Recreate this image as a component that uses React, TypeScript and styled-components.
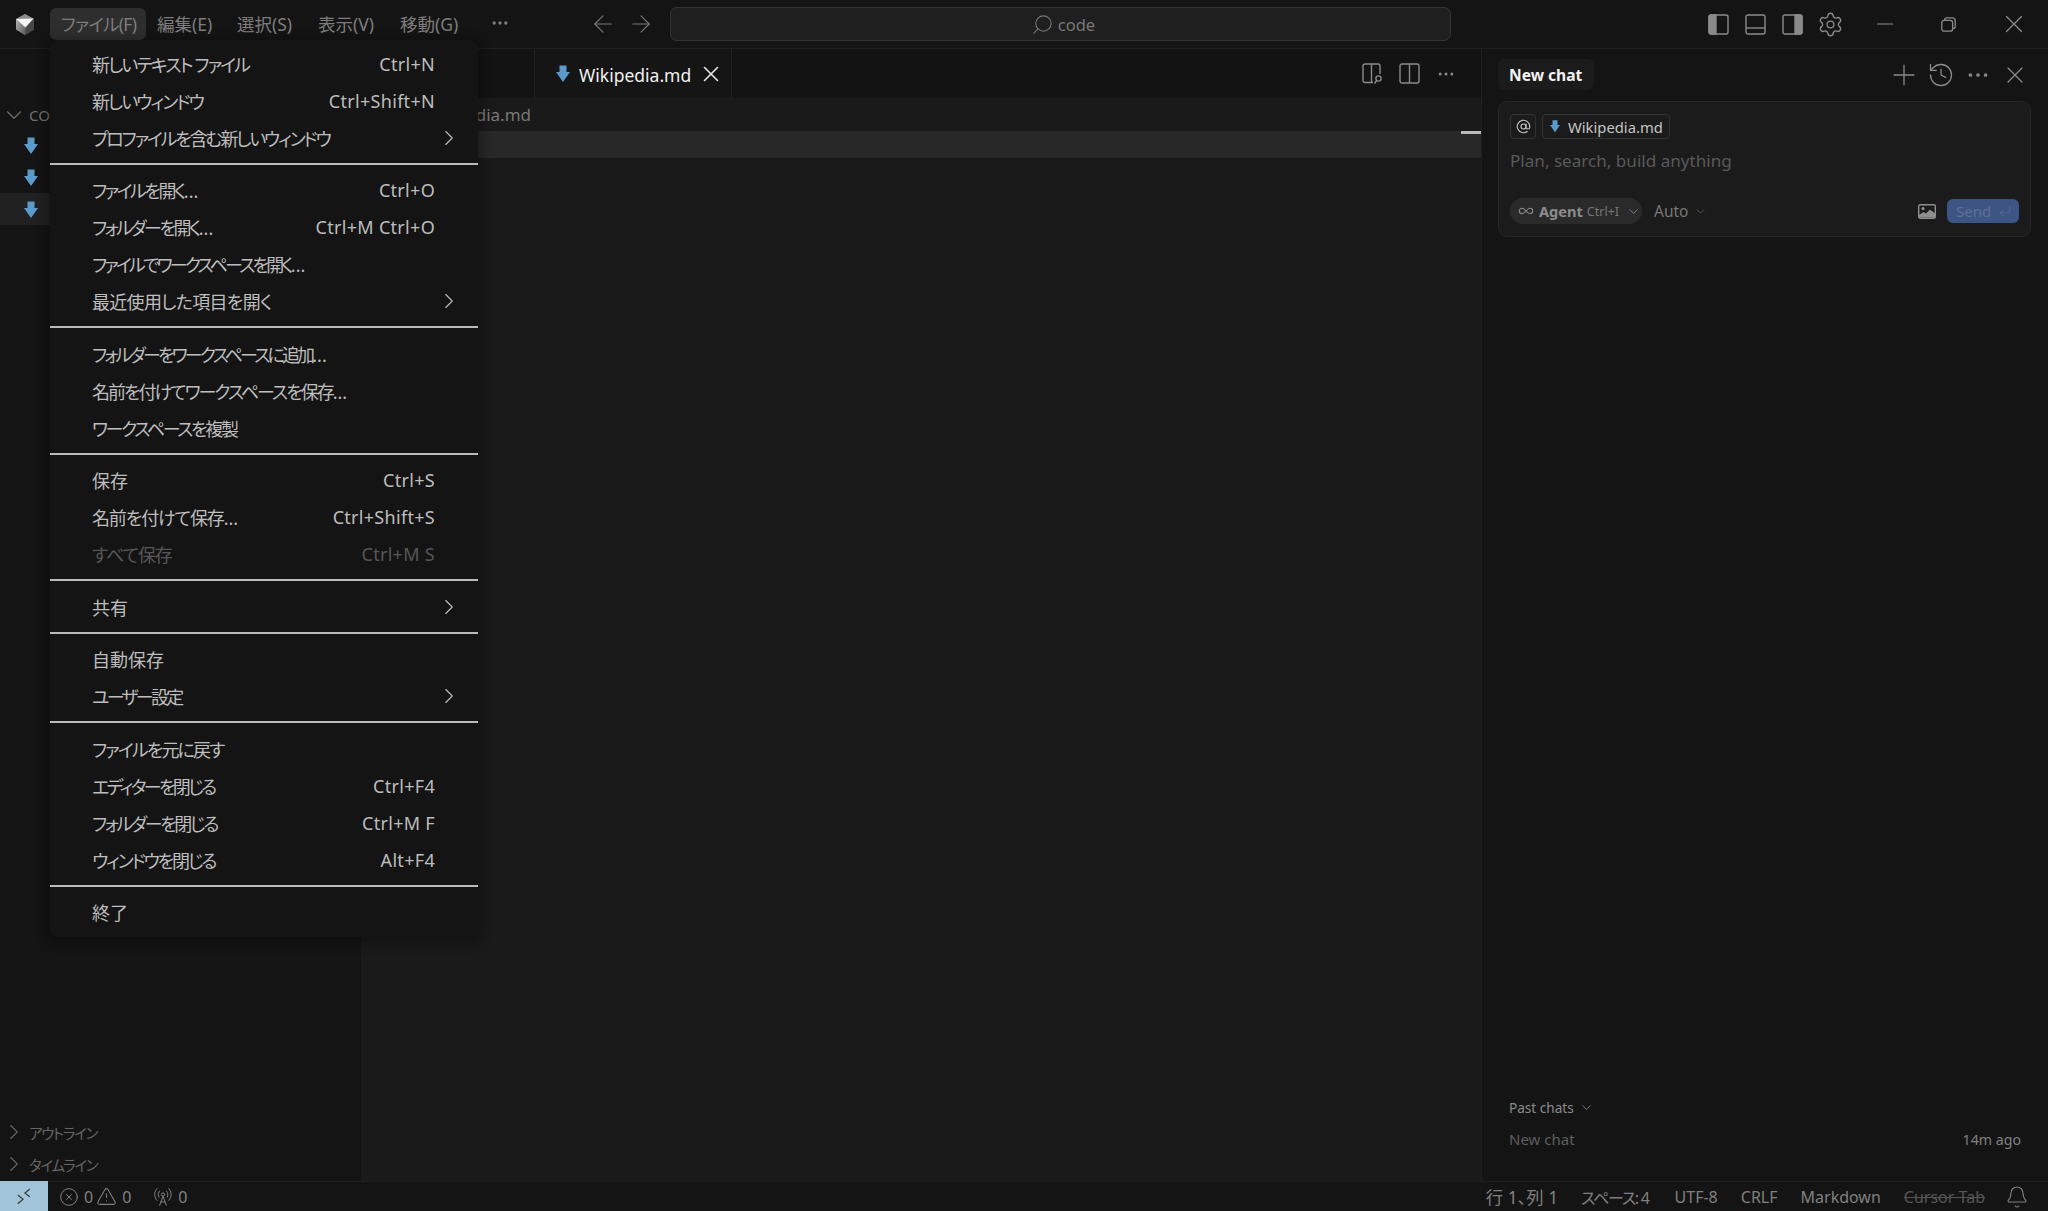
import React from "react";
import styled, { createGlobalStyle } from "styled-components";
import {
  ArrowLeft, ArrowRight, AtSign, Bell, ChevronDown, ChevronRight, CircleX, CornerDownLeft,
  History, Infinity as InfinityIcon, Minus, MoreHorizontal, Plus, RadioTower,
  Search, Settings, TriangleAlert, X,
} from "lucide-react";

const UI = `"Noto Sans", "Noto Sans CJK JP", sans-serif`;

const Global = createGlobalStyle`
  html, body { margin: 0; padding: 0; background: #141414; }
  #root { width: 2048px; height: 1211px; overflow: hidden; }
  * { box-sizing: border-box; }
`;

const Page = styled.div`
  position: relative; width: 2048px; height: 1211px; display: flex; flex-direction: column;
  background: #141414; color: #8a8a8a; font-family: ${UI}; font-size: 17px;
  font-feature-settings: "palt"; overflow: hidden;
`;

/* title bar */
const TitleBar = styled.header`
  height: 49px; flex: none; display: flex; align-items: center; background: #141414;
  border-bottom: 1px solid #1e1e1e; color: #8a8a8a;
`;
const LogoSlot = styled.div` width: 50px; padding-left: 15px; display: flex; `;
const MenuBar = styled.nav` width: 480px; display: flex; align-items: center; `;
const MenuBarItem = styled.div<{ $open?: boolean; $width: number }>`
  height: 32px; width: ${p => p.$width}px; padding: 0 11px 2px; display: flex; align-items: center; border-radius: 6px;
  font-size: 17.5px; white-space: nowrap; color: #7d7d7d; background: ${p => (p.$open ? "#2e2e2e" : "transparent")};
`;
const OpenMenuLabel = styled.span` letter-spacing: -0.7px; `;
const NavArrows = styled.div` width: 140px; padding-left: 59px; display: flex; gap: 10px; color: #777; `;
const SearchBox = styled.div`
  width: 781px; height: 34px; padding-left: 5px; border: 1px solid #333; border-radius: 7px; background: #1f1f1f;
  display: flex; align-items: center; justify-content: center; gap: 4px; color: #777; font-size: 16.5px;
`;
const LayoutIcons = styled.div` margin-left: auto; display: flex; align-items: center; gap: 16px; color: #8a8a8a; `;
const GearSlot = styled.div` display: flex; margin-left: -2px; `;
const WindowControls = styled.div` margin-left: 28px; margin-right: 19px; display: flex; align-items: center; gap: 43px; color: #8a8a8a; `;

/* main */
const Main = styled.main` flex: 1; display: flex; min-height: 0; `;

const Sidebar = styled.aside`
  width: 362px; flex: none; display: flex; flex-direction: column; padding-top: 51px;
  background: #141414; border-right: 1px solid #1a1a1a;
`;
const SectionHeader = styled.div`
  height: 29px; display: flex; align-items: center; gap: 2px; padding-left: 1px; font-size: 15px; color: #707070;
`;
const BottomHeader = styled(SectionHeader)` height: 32px; font-size: 14.5px; letter-spacing: -1.3px; color: #666; `;
const FileRow = styled.div<{ $selected?: boolean }>`
  height: 32px; padding-left: 24px; display: flex; align-items: center; gap: 8px; color: #aaa;
  background: ${p => (p.$selected ? "#212121" : "transparent")};
`;
const BottomSections = styled.div` margin-top: auto; margin-bottom: 1px; `;

const Editor = styled.section` width: 1119px; flex: none; display: flex; flex-direction: column; background: #1a1a1a; `;
const TabBar = styled.div`
  height: 49px; flex: none; display: flex; align-items: stretch; background: #131313; padding-left: 172px;
`;
const Tab = styled.div`
  width: 198px; display: flex; align-items: center; padding-left: 21px; gap: 9px; background: #151515;
  border-left: 1px solid #202020; border-right: 1px solid #202020; color: #f0f0f0; font-size: 17.5px;
`;
const TabName = styled.span` padding-top: 2px; `;
const TabClose = styled.span` display: flex; margin-left: -2px; color: #e8e8e8; `;
const TabActions = styled.div`
  margin-left: auto; margin-right: 25px; display: flex; align-items: center; gap: 16px; color: #8a8a8a;
`;
const Breadcrumb = styled.div`
  height: 33px; flex: none; display: flex; align-items: center; padding-left: 60px; font-size: 17px; color: #777;
`;
const CurrentLine = styled.div` position: relative; height: 27px; flex: none; background: #282828; `;
const RulerMark = styled.div` position: absolute; right: 0; top: 0; width: 20px; height: 3px; background: #b9b9b9; `;

const Chat = styled.aside`
  flex: 1; display: flex; flex-direction: column; background: #141414; border-left: 1px solid #1f1f1f;
  padding: 10px 17px 0 16px; position: relative;
`;
const ChatHeader = styled.div` height: 31px; flex: none; display: flex; align-items: center; `;
const ChatTitle = styled.div`
  height: 31px; width: 96px; border-radius: 6px; background: #1b1b1b; color: #f2f2f2; font-weight: 700;
  font-size: 15.6px; display: flex; align-items: center; padding-left: 11px;
`;
const ChatActions = styled.div` margin-left: auto; margin-right: -2px; display: flex; align-items: center; color: #8a8a8a; `;
const ActionSlot = styled.div` width: 37px; height: 31px; display: flex; align-items: center; justify-content: center; svg { flex: none; } `;
const Composer = styled.div`
  margin-top: 11px; width: 533px; height: 136px; border: 1px solid #262626; border-radius: 9px; background: #1b1b1b;
  padding: 12px 12px 0 11px; display: flex; flex-direction: column;
`;
const ChipRow = styled.div` display: flex; gap: 6px; height: 25px; `;
const Chip = styled.div<{ $square?: boolean }>`
  height: 25px; border: 1px solid #333; border-radius: 4px; display: flex; align-items: center;
  justify-content: ${p => (p.$square ? "center" : "flex-start")}; width: ${p => (p.$square ? "26px" : "128px")};
  padding-left: ${p => (p.$square ? "0" : "7px")}; gap: 8px; font-size: 14.8px; color: #c4c4c4;
`;
const Placeholder = styled.div` margin-top: 9px; height: 26px; line-height: 26px; color: #595959; font-size: 17.1px; `;
const ComposerBar = styled.div` margin-top: 24px; display: flex; align-items: center; height: 26px; `;
const AgentPill = styled.div`
  width: 132px; height: 26px; border-radius: 13px; background: #2a2a2a; display: flex; align-items: center;
  padding-left: 8px; color: #8c8c8c;
`;
const AgentName = styled.span` margin-left: 5px; font-weight: 700; font-size: 14.6px; `;
const AgentKey = styled.span` margin-left: 4px; font-size: 12.5px; color: #777; `;
const AutoPicker = styled.div` margin-left: 12px; display: flex; align-items: center; gap: 6px; font-size: 15.5px; color: #777; `;
const BarRight = styled.div` margin-left: auto; margin-right: -1px; display: flex; align-items: center; gap: 11px; color: #8f8f8f; `;
const SendButton = styled.div`
  width: 72px; height: 24px; border-radius: 6px; background: #3d5585; color: #5f7090; font-size: 15px;
  display: flex; align-items: center; padding-left: 9px; gap: 7px;
`;
const PastChats = styled.div`
  position: absolute; left: 27px; right: 27px; bottom: 32px; display: flex; flex-direction: column; gap: 12px;
`;
const PastHeader = styled.div` height: 20px; display: flex; align-items: center; gap: 5px; font-size: 13.6px; color: #8a8a8a; `;
const PastRow = styled.div` height: 20px; display: flex; justify-content: space-between; align-items: center; font-size: 15px; color: #5e5e5e; `;
const PastTime = styled.span` color: #808080; font-size: 14.2px; `;

/* status bar */
const StatusBar = styled.footer`
  height: 30px; flex: none; display: flex; align-items: center; background: #141414; border-top: 1px solid #1e1e1e;
  color: #808080; font-size: 16px;
`;
const RemoteButton = styled.div`
  width: 48px; height: 30px; margin-top: -1px; background: #a2c4d8; color: #3a4348; display: flex; align-items: center; justify-content: center;
`;
const StatusItem = styled.div<{ $gap?: number }>`
  display: flex; align-items: center; gap: 5px; margin-left: ${p => p.$gap ?? 0}px; white-space: nowrap;
`;
const StatusRight = styled.div` margin-left: auto; margin-right: 19px; display: flex; align-items: center; gap: 23px; `;
const Position = styled.span` font-size: 17.4px; `;
const Indent = styled.span` letter-spacing: -1.3px; margin-right: 3px; `;
const Struck = styled.span` text-decoration: line-through; color: #555; `;
const BellSlot = styled.span` display: flex; margin-left: -3px; `;

/* file menu */
const FileMenu = styled.div`
  position: absolute; left: 50px; top: 40px; width: 428px; height: 897px; padding-top: 5px;
  background: #141414; border-radius: 8px; box-shadow: 0 3px 10px 5px rgba(0,0,0,.28); color: #bdbdbd;
`;
const MenuRow = styled.div<{ $disabled?: boolean }>`
  height: 37px; display: flex; align-items: center; padding: 0 25px 0 42px; position: relative;
  white-space: nowrap; color: ${p => (p.$disabled ? "#565656" : "#bdbdbd")};
`;
const MenuLabel = styled.span<{ $track?: number }>` font-size: 18px; letter-spacing: ${p => p.$track ?? 0}px; `;
const Dots = styled.span` letter-spacing: 0; `;
const Shortcut = styled.span` margin-left: auto; margin-right: 18px; font-size: 18px; letter-spacing: 0.3px; `;
const SubArrow = styled.span` position: absolute; right: 16px; top: 5.5px; display: flex; `;
const MenuSeparator = styled.div` height: 2px; margin: 6.75px 0; background: #bbb; `;

const MdIcon = ({ size = 14 }: { size?: number }) => (
  <svg width={size} height={(size * 17) / 14} viewBox="0 0 14 17" style={{ flex: "none" }}>
    <path d="M3.5 0.5 L10.5 0.5 L10.5 7 L14 7 L7 17 L0 7 L3.5 7 Z" fill="#5b9bc9" />
  </svg>
);
const Logo = () => (
  <svg width="20" height="21" viewBox="0 0 20 21">
    <defs>
      <linearGradient id="logoLeft" x1="0" y1="0" x2="1" y2="1">
        <stop offset="0" stopColor="#b4b4b4" />
        <stop offset="1" stopColor="#5a5a5a" />
      </linearGradient>
    </defs>
    <path d="M10 0 L19 5 L19 15.5 L10 21 L1 15.5 L1 5 Z" fill="#5c5c5c" />
    <path d="M1 5 L10 13 L10 21 L1 15.5 Z" fill="url(#logoLeft)" />
    <path d="M1 5 L10 0 L19 5 Z" fill="#8c8c8c" />
    <path d="M19 5 L19 15.5 L10 21 L11 12 Z" fill="#484848" />
    <path d="M1 5 L18.5 4.5 L10.5 13.5 Z" fill="#f4f4f4" />
  </svg>
);
const PanelIcon = ({ side }: { side: "left" | "bottom" | "right" }) => (
  <svg width="21" height="21" viewBox="0 0 21 21" fill="none" stroke="currentColor" strokeWidth="1.4">
    <rect x="1" y="1" width="19" height="19" rx="2" />
    {side === "left" && <path d="M1 3 a2 2 0 0 1 2-2 h5 v19 h-5 a2 2 0 0 1-2-2 Z" fill="currentColor" />}
    {side === "right" && <path d="M20 3 a2 2 0 0 0-2-2 h-5 v19 h5 a2 2 0 0 0 2-2 Z" fill="currentColor" />}
    {side === "bottom" && <path d="M1 14 h19" />}
  </svg>
);
const RestoreIcon = () => (
  <svg width="15" height="15" viewBox="0 0 15 15" fill="none" stroke="currentColor" strokeWidth="1.3">
    <rect x="0.8" y="3.4" width="10.8" height="10.8" rx="2.2" />
    <path d="M3.6 3.4 V2.8 a2 2 0 0 1 2-2 h5.8 a2.8 2.8 0 0 1 2.8 2.8 v5.8 a2 2 0 0 1-2 2 h-0.6" />
  </svg>
);
const PreviewIcon = () => (
  <svg width="21" height="21" viewBox="0 0 21 21" fill="none" stroke="currentColor" strokeWidth="1.4">
    <path d="M11 19.5 H3 a2 2 0 0 1-2-2 V3 a2 2 0 0 1 2-2 h13 a2 2 0 0 1 2 2 v8" />
    <path d="M9.5 1 v18.5" />
    <circle cx="16.5" cy="15.5" r="2.6" />
    <path d="M14.6 17.5 l-2 3" />
  </svg>
);
const SplitIcon = () => (
  <svg width="21" height="21" viewBox="0 0 21 21" fill="none" stroke="currentColor" strokeWidth="1.4">
    <rect x="1" y="1" width="19" height="19" rx="2" />
    <path d="M10.5 1 v19" />
  </svg>
);
const PictureIcon = () => (
  <svg width="18" height="15" viewBox="0 0 18 15">
    <rect x="0.7" y="0.7" width="16.6" height="13.6" rx="1.5" fill="#1b1b1b" stroke="currentColor" strokeWidth="1.4" />
    <circle cx="5" cy="4.6" r="1.6" fill="currentColor" />
    <path d="M1 13.5 V11 L5.5 8 L8 9.5 L12 5.5 L17 9.5 V13.5 Z" fill="currentColor" />
  </svg>
);
const RemoteIcon = () => (
  <svg width="14" height="17" viewBox="0 0 14 17" fill="none" stroke="currentColor" strokeWidth="1.3">
    <path d="M0.8 7 L6 11.2 L0.8 15.8" />
    <path d="M12.8 1 L8 5 L12.8 8.8" />
  </svg>
);

type Entry = { label: string; dots?: boolean; key?: string; sub?: boolean; disabled?: boolean; track?: number };
const groups: Entry[][] = [
  [{ label: "新しいテキスト ファイル", key: "Ctrl+N", track: -1.9 }, { label: "新しいウィンドウ", key: "Ctrl+Shift+N", track: -2 }, { label: "プロファイルを含む新しいウィンドウ", sub: true, track: -2.2 }],
  [{ label: "ファイルを開く", dots: true, key: "Ctrl+O", track: -2.5 }, { label: "フォルダーを開く", dots: true, key: "Ctrl+M Ctrl+O", track: -2.54 }, { label: "ファイルでワークスペースを開く", dots: true, track: -2.85 }, { label: "最近使用した項目を開く", sub: true, track: -0.7 }],
  [{ label: "フォルダーをワークスペースに追加", dots: true, track: -2.84 }, { label: "名前を付けてワークスペースを保存", dots: true, track: -2.02 }, { label: "ワークスペースを複製", track: -2.37 }],
  [{ label: "保存", key: "Ctrl+S" }, { label: "名前を付けて保存", dots: true, key: "Ctrl+Shift+S", track: -1.13 }, { label: "すべて保存", key: "Ctrl+M S", disabled: true, track: -1.1 }],
  [{ label: "共有", sub: true }],
  [{ label: "自動保存" }, { label: "ユーザー設定", sub: true, track: -2.75 }],
  [{ label: "ファイルを元に戻す", track: -1.9 }, { label: "エディターを閉じる", key: "Ctrl+F4", track: -2.67 }, { label: "フォルダーを閉じる", key: "Ctrl+M F", track: -2.4 }, { label: "ウィンドウを閉じる", key: "Alt+F4", track: -2.2 }],
  [{ label: "終了" }],
];

export default function App() {
  return (
    <Page>
      <Global />
      <TitleBar>
        <LogoSlot><Logo /></LogoSlot>
        <MenuBar>
          <MenuBarItem $open $width={96}><OpenMenuLabel>ファイル(F)</OpenMenuLabel></MenuBarItem>
          <MenuBarItem $width={80}>編集(E)</MenuBarItem>
          <MenuBarItem $width={81}>選択(S)</MenuBarItem>
          <MenuBarItem $width={82}>表示(V)</MenuBarItem>
          <MenuBarItem $width={90}>移動(G)</MenuBarItem>
          <MenuBarItem $width={44}><MoreHorizontal size={20} style={{ flex: "none" }} /></MenuBarItem>
        </MenuBar>
        <NavArrows>
          <ArrowLeft size={28} strokeWidth={1} />
          <ArrowRight size={28} strokeWidth={1} />
        </NavArrows>
        <SearchBox>
          <Search size={23} strokeWidth={1.1} style={{ transform: "scaleX(-1)" }} />
          <span>code</span>
        </SearchBox>
        <LayoutIcons>
          <PanelIcon side="left" />
          <PanelIcon side="bottom" />
          <PanelIcon side="right" />
          <GearSlot><Settings size={27} strokeWidth={1.2} /></GearSlot>
        </LayoutIcons>
        <WindowControls>
          <Minus size={26} strokeWidth={1} />
          <RestoreIcon />
          <X size={30} strokeWidth={1} />
        </WindowControls>
      </TitleBar>

      <Main>
        <Sidebar>
          <SectionHeader><ChevronDown size={26} strokeWidth={1} />CO</SectionHeader>
          <FileRow><MdIcon /></FileRow>
          <FileRow><MdIcon /></FileRow>
          <FileRow $selected><MdIcon /></FileRow>
          <BottomSections>
            <BottomHeader><ChevronRight size={26} strokeWidth={1} />アウトライン</BottomHeader>
            <BottomHeader><ChevronRight size={26} strokeWidth={1} />タイムライン</BottomHeader>
          </BottomSections>
        </Sidebar>

        <Editor>
          <TabBar>
            <Tab>
              <MdIcon />
              <TabName>Wikipedia.md</TabName>
              <TabClose><X size={26} strokeWidth={1.5} /></TabClose>
            </Tab>
            <TabActions>
              <PreviewIcon />
              <SplitIcon />
              <MoreHorizontal size={20} strokeWidth={1.6} />
            </TabActions>
          </TabBar>
          <Breadcrumb>Wikipedia.md</Breadcrumb>
          <CurrentLine><RulerMark /></CurrentLine>
        </Editor>

        <Chat>
          <ChatHeader>
            <ChatTitle>New chat</ChatTitle>
            <ChatActions>
              <ActionSlot><Plus size={34} strokeWidth={0.9} /></ActionSlot>
              <ActionSlot><History size={28} strokeWidth={1.1} /></ActionSlot>
              <ActionSlot><MoreHorizontal size={26} strokeWidth={1.4} /></ActionSlot>
              <ActionSlot><X size={28} strokeWidth={1.1} /></ActionSlot>
            </ChatActions>
          </ChatHeader>
          <Composer>
            <ChipRow>
              <Chip $square><AtSign size={15} strokeWidth={1.8} /></Chip>
              <Chip><MdIcon size={10} /><span>Wikipedia.md</span></Chip>
            </ChipRow>
            <Placeholder>Plan, search, build anything</Placeholder>
            <ComposerBar>
              <AgentPill>
                <InfinityIcon size={16} strokeWidth={1.6} />
                <AgentName>Agent</AgentName>
                <AgentKey>Ctrl+I</AgentKey>
                <ChevronDown size={15} strokeWidth={1.3} style={{ marginLeft: 7 }} />
              </AgentPill>
              <AutoPicker>Auto<ChevronDown size={13} strokeWidth={1.2} /></AutoPicker>
              <BarRight>
                <PictureIcon />
                <SendButton>Send<CornerDownLeft size={14} strokeWidth={1.3} /></SendButton>
              </BarRight>
            </ComposerBar>
          </Composer>
          <PastChats>
            <PastHeader>Past chats<ChevronDown size={15} strokeWidth={1.3} /></PastHeader>
            <PastRow><span>New chat</span><PastTime>14m ago</PastTime></PastRow>
          </PastChats>
        </Chat>
      </Main>

      <StatusBar>
        <RemoteButton><RemoteIcon /></RemoteButton>
        <StatusItem $gap={11}><CircleX size={20} strokeWidth={1.2} />0</StatusItem>
        <StatusItem $gap={3}><TriangleAlert size={21} strokeWidth={1.2} />0</StatusItem>
        <StatusItem $gap={22}><RadioTower size={20} strokeWidth={1.2} />0</StatusItem>
        <StatusRight>
          <Position>行 1、列 1</Position>
          <Indent>スペース: 4</Indent>
          <span>UTF-8</span>
          <span>CRLF</span>
          <span>Markdown</span>
          <Struck>Cursor Tab</Struck>
          <BellSlot><Bell size={24} strokeWidth={1.1} /></BellSlot>
        </StatusRight>
      </StatusBar>

      <FileMenu>
        {groups.map((group, i) => (
          <React.Fragment key={i}>
            {i > 0 && <MenuSeparator />}
            {group.map(item => (
              <MenuRow key={item.label} $disabled={item.disabled}>
                <MenuLabel $track={item.track}>{item.label}{item.dots && <Dots>...</Dots>}</MenuLabel>
                {item.key && <Shortcut>{item.key}</Shortcut>}
                {item.sub && <SubArrow><ChevronRight size={26} strokeWidth={1} /></SubArrow>}
              </MenuRow>
            ))}
          </React.Fragment>
        ))}
      </FileMenu>
    </Page>
  );
}
